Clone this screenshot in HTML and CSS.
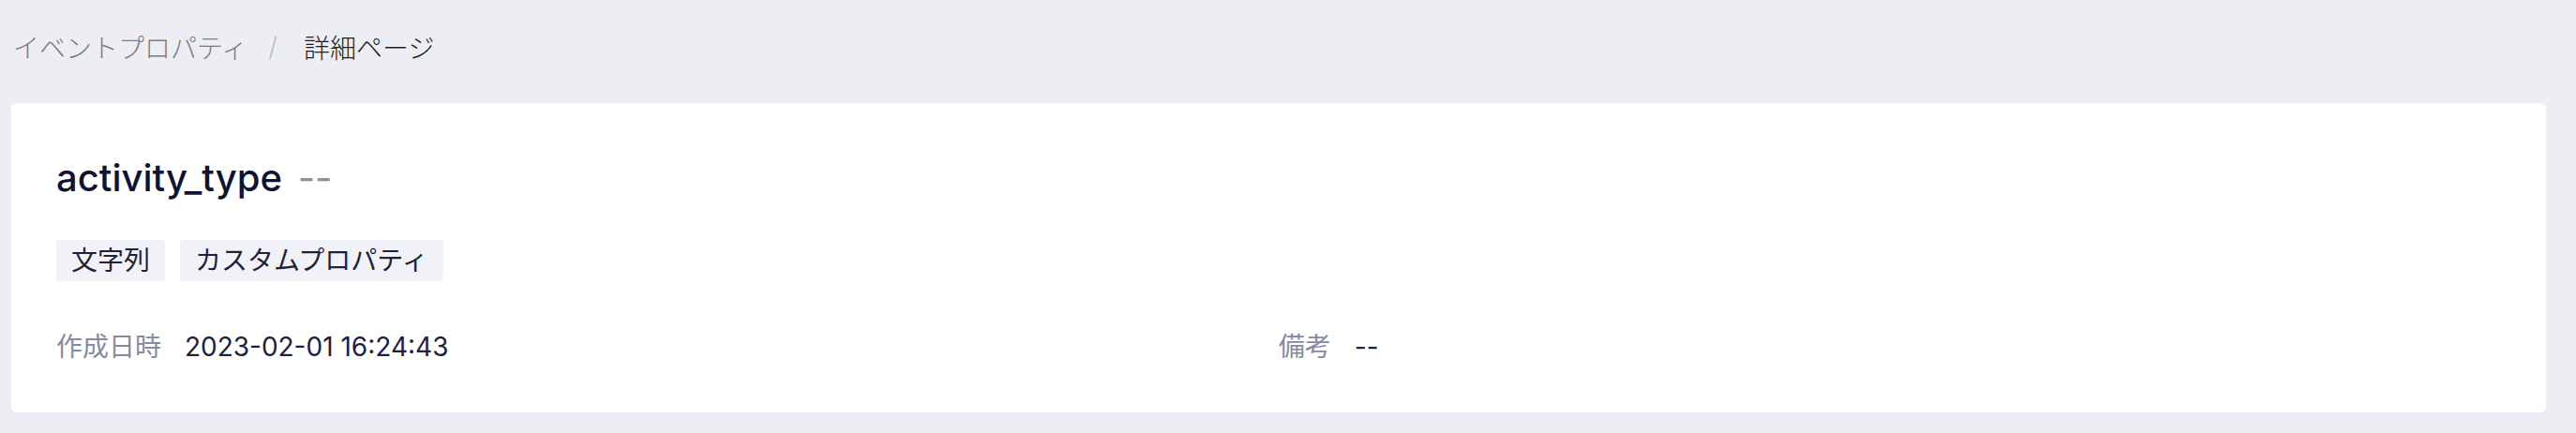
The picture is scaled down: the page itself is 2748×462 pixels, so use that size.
FILE: index.html
```html
<!DOCTYPE html>
<html lang="ja">
  <head>
    <meta charset="UTF-8" />
    <meta name="viewport" content="width=device-width, initial-scale=1.0" />
    <title>詳細ページ</title>
    <link rel="stylesheet" href="styles.css">
  </head>
  <body>
    <div class="page">
      <div class="breadcrumb">
        <span class="crumb">イベントプロパティ</span>
        <span class="sep">/</span>
        <span class="crumb current">詳細ページ</span>
      </div>

      <div class="card">
        <h1 class="title">activity_type <span class="alias">--</span></h1>
        <div class="tags">
          <span class="tag">文字列</span>
          <span class="tag">カスタムプロパティ</span>
        </div>
        <div class="meta">
          <div class="meta-item">
            <span class="meta-label">作成日時</span>
            <span class="meta-value">2023-02-01 16:24:43</span>
          </div>
          <div class="meta-item">
            <span class="meta-label">備考</span>
            <span class="meta-value">--</span>
          </div>
        </div>
      </div>
    </div>
  </body>
</html>
```

FILE: styles.css
```css
body {
  margin: 0;
  background-color: #edeef3;
  font-family: Inter, "Noto Sans CJK JP", sans-serif;
  color: #1d2040;
}
.page {
  padding: 0 32px 22px 12px;
}
.breadcrumb {
  display: flex;
  align-items: center;
  padding: 30px 0 0 2px;
  height: 40px;
  margin-bottom: 40px;
  font-size: 28px;
  line-height: 40px;
  font-family: "Noto Sans CJK JP", sans-serif;
  font-weight: 300;
}
.crumb {
  color: #7c7c80;
}
.crumb.current {
  color: #1f1f23;
}
.sep {
  color: #b9bdca;
  margin: 0 28px 0 22px;
  font-family: Inter, sans-serif;
}
.card {
  background-color: white;
  border-radius: 6px;
  padding: 48px 48px 50px;
}
.title {
  margin: 0 0 34px;
  font-size: 40px;
  line-height: 64px;
  font-weight: 500;
  color: #0f1433;
}
.alias {
  margin-left: 6px;
  font-weight: 400;
  color: #8a8fa6;
}
.tags {
  display: flex;
  gap: 16px;
  margin-bottom: 50px;
}
.tag {
  background-color: #f1f2f7;
  border-radius: 4px;
  padding: 0 16px;
  font-size: 28px;
  line-height: 44px;
  color: #1f2237;
}
.meta {
  display: grid;
  grid-template-columns: 1fr 1fr;
  font-size: 28px;
  line-height: 40px;
}
.meta-label {
  color: #868aa0;
  margin-right: 17px;
}
.meta-value {
  color: #1d2040;
}
```
